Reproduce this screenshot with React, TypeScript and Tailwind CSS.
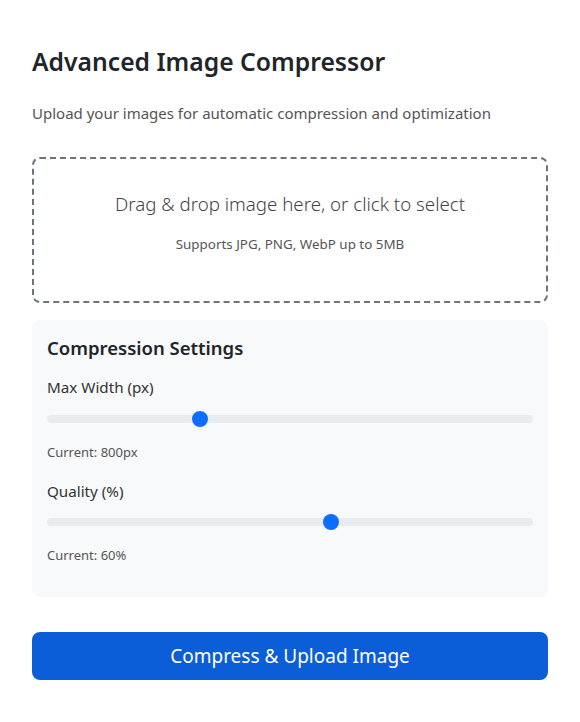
import React from "react";

function Slider({ pct }: { pct: number }) {
  return (
    <div className="relative h-[16px] flex items-center">
      <div className="w-full h-[8px] rounded-full bg-[#e9ecef]" />
      <div
        className="absolute top-0 w-[16px] h-[16px] rounded-full bg-[#0d6efd]"
        style={{ left: `calc(${pct}% - 8px)` }}
      />
    </div>
  );
}

export default function App() {
  return (
    <div className="bg-white min-h-[722px] px-[32px] pt-[44px] text-[#222]" style={{ fontFamily: '"Noto Sans", "Open Sans", sans-serif' }}>
      <h1 className="text-[24.7px] font-semibold leading-[36px] text-[#212529]">Advanced Image Compressor</h1>
      <p className="mt-[21px] text-[15px] leading-[24px] text-[#555]">
        Upload your images for automatic compression and optimization
      </p>
      <div className="mt-[32px] h-[146px] border-2 border-dashed border-[#6c757d] rounded-[8px] flex flex-col items-center justify-center pb-[16px]">
        <div className="text-[18.7px] font-light leading-[28px] text-[#444]">Drag &amp; drop image here, or click to select</div>
        <div className="mt-[16px] text-[13.4px] leading-[20px] text-[#555]">Supports JPG, PNG, WebP up to 5MB</div>
      </div>
      <div className="mt-[17px] bg-[#f8f9fa] rounded-[8px] px-[15px] pt-[14px] pb-[32px]">
        <h2 className="text-[18.5px] font-semibold leading-[28px] text-[#212529]">Compression Settings</h2>
        <div className="mt-[14px] text-[15.2px] leading-[22px] text-[#333]">Max Width (px)</div>
        <div className="mt-[13px]">
          <Slider pct={31.5} />
        </div>
        <div className="mt-[15px] text-[13px] leading-[20px] text-[#555]">Current: 800px</div>
        <div className="mt-[18px] text-[15.2px] leading-[22px] text-[#333]">Quality (%)</div>
        <div className="mt-[12px]">
          <Slider pct={58.5} />
        </div>
        <div className="mt-[15px] text-[13px] leading-[20px] text-[#555]">Current: 60%</div>
      </div>
      <button className="mt-[35px] w-full h-[48px] rounded-[8px] bg-[#0b5ed7] text-white text-[19px] leading-[28px]">
        Compress &amp; Upload Image
      </button>
    </div>
  );
}
